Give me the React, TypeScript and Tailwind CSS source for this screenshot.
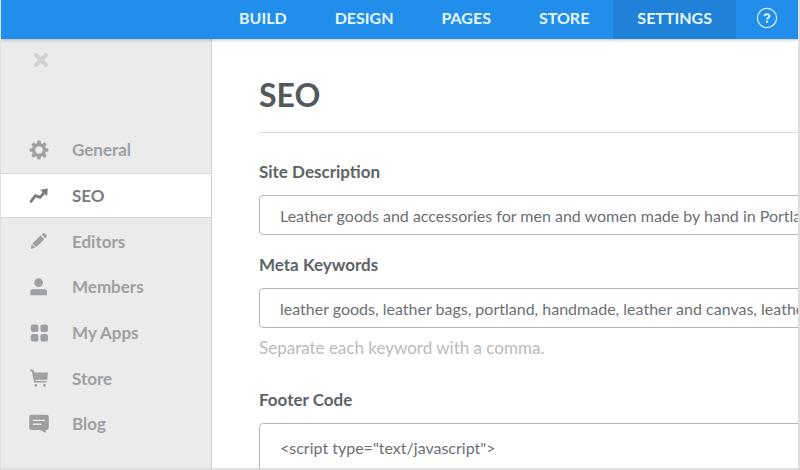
import React, { useState } from 'react';

const navLinks = ['Build', 'Design', 'Pages', 'Store', 'Settings'];

const GearIcon = () => (
  <svg viewBox="0 0 20 20" className="w-5 h-5" fill="none" stroke="currentColor">
    <circle cx="10" cy="10" r="5.4" strokeWidth="3.4" />
    <g fill="currentColor" stroke="none">
      {[0, 45, 90, 135, 180, 225, 270, 315].map((angle) => (
        <rect key={angle} x="8.2" y="0.6" width="3.6" height="4" rx="1.1" transform={`rotate(${angle} 10 10)`} />
      ))}
    </g>
  </svg>
);

const TrendIcon = () => (
  <svg viewBox="0 0 20 20" className="w-5 h-5">
    <path d="M2 15.4 6.4 9.6 11.2 11.4 15.6 6" fill="none" stroke="currentColor" strokeWidth="2.8" strokeLinejoin="round" strokeLinecap="round" />
    <path d="M11.7 4 18.4 2.8 17.9 9.6Z" fill="currentColor" stroke="currentColor" strokeWidth="0.6" strokeLinejoin="round" />
  </svg>
);

const PencilIcon = () => (
  <svg viewBox="0 0 20 20" className="w-5 h-5" fill="currentColor">
    <path d="M1.6 18 2.9 13.2 6.4 16.7Z" />
    <path d="M3.4 12.4 11.6 4.4 15.4 8.2 7.2 16.2Z" />
    <path d="M12.5 3.6 14 2.3Q14.9 1.6 15.8 2.4L17.5 4.1Q18.2 5 17.5 5.9L16.2 7.3Z" />
  </svg>
);

const MemberIcon = () => (
  <svg viewBox="0 0 20 20" className="w-5 h-5" fill="currentColor">
    <circle cx="9.6" cy="5.6" r="4.3" />
    <path d="M1.4 18.2V14.6Q1.4 12.2 4 12.2H15.4Q18 12.2 18 14.6V18.2Z" />
  </svg>
);

const AppsIcon = () => (
  <svg viewBox="0 0 20 20" className="w-5 h-5" fill="currentColor">
    <rect x="1.8" y="1.4" width="7.6" height="7.6" rx="2.2" />
    <rect x="11.4" y="1.4" width="7.6" height="7.6" rx="2.2" />
    <rect x="1.8" y="11" width="7.6" height="7.6" rx="2.2" />
    <rect x="11.4" y="11" width="7.6" height="7.6" rx="2.2" />
  </svg>
);

const CartIcon = () => (
  <svg viewBox="0 0 20 20" className="w-5 h-5" fill="currentColor">
    <path d="M1 1.2 4.4 1.8 5.2 4.4H19L18.2 11.8H6.6L6.8 13H17.6V14.6H5.2L2.9 3.8 1.2 3Z" />
    <circle cx="6.8" cy="17.4" r="1.4" />
    <circle cx="15.4" cy="17.4" r="1.4" />
  </svg>
);

const BlogIcon = () => (
  <svg viewBox="0 0 20 20" className="w-5 h-5">
    <path d="M2.6 0.8H17.4Q19.8 0.8 19.8 3.2V13.6Q19.8 16 17.4 16H16.8V19L11 16H2.6Q0.2 16 0.2 13.6V3.2Q0.2 0.8 2.6 0.8Z" fill="currentColor" />
    <path d="M4 6.4H16M4 10.2H12.6" stroke="#ebebeb" strokeWidth="1.4" />
  </svg>
);

const sideLinks = [
  { name: 'General', icon: GearIcon },
  { name: 'SEO', icon: TrendIcon },
  { name: 'Editors', icon: PencilIcon },
  { name: 'Members', icon: MemberIcon },
  { name: 'My Apps', icon: AppsIcon },
  { name: 'Store', icon: CartIcon },
  { name: 'Blog', icon: BlogIcon },
];

const Header: React.FC = () => (
  <header className="relative z-10 flex h-[39px] shrink-0 justify-end bg-[#218eeb] pr-5 text-white shadow-[0_1px_3px_rgba(0,0,0,0.25)]">
    <nav className="flex">
      {navLinks.map((link) => (
        <a
          key={link}
          href="#"
          className={`flex items-center px-6 pb-1 text-base font-bold uppercase text-[#e6f6ff] ${link === 'Settings' ? 'bg-[#1f82d8]' : ''}`}
        >
          {link}
        </a>
      ))}
    </nav>
    <button type="button" aria-label="Help" className="ml-5 pb-1 text-[#d8efff]">
      <svg viewBox="0 0 22 22" className="w-[22px] h-[22px]" fill="none" stroke="currentColor">
        <circle cx="11" cy="11" r="9.6" strokeWidth="1.2" />
        <path d="M8.6 9.2Q8.7 7.2 11 7.2 13.4 7.2 13.4 9.1 13.4 10.2 12.2 10.8 11.1 11.4 11.1 12.6" strokeWidth="2" />
        <circle cx="11.1" cy="14.8" r="1.2" fill="currentColor" stroke="none" />
      </svg>
    </button>
  </header>
);

const Sidebar: React.FC = () => (
  <aside className="w-[211px] shrink-0 border-r border-[#cfd3d5] bg-[#ebebeb]">
    <button type="button" aria-label="Close" className="mt-[14px] ml-[33px] block text-[#d0d2d3]">
      <svg viewBox="0 0 14 14" className="w-[14px] h-[14px]" fill="none" stroke="currentColor" strokeWidth="4.2" strokeLinecap="round">
        <path d="M2.3 2.3 11.7 11.7M11.7 2.3 2.3 11.7" />
      </svg>
    </button>
    <nav className="mt-[60px] grid h-[320px] grid-rows-7">
      {sideLinks.map(({ name, icon: Icon }) => (
        <a
          key={name}
          href="#"
          className={`flex items-center gap-[23px] border-y pl-7 text-[17px] font-bold ${
            name === 'SEO' ? 'border-[#d6d8d9] bg-white text-[#797d7f]' : 'border-transparent text-[#9da0a2]'
          }`}
        >
          <Icon />
          <span>{name}</span>
        </a>
      ))}
    </nav>
  </aside>
);

const labelClass = 'block text-[17px] leading-6 font-bold text-[#5d6366]';
const fieldClass =
  'mt-[11px] block w-full rounded border border-[#b4b7b8] bg-white px-5 text-base text-[#6c7072] outline-none';

export default function App() {
  const [description, setDescription] = useState(
    'Leather goods and accessories for men and women made by hand in Portland'
  );
  const [keywords, setKeywords] = useState(
    'leather goods, leather bags, portland, handmade, leather and canvas, leather'
  );
  const [footerCode, setFooterCode] = useState('<script type="text/javascript">');

  return (
    <div className="flex h-screen flex-col overflow-hidden border-r-2 border-b-2 border-l border-[#dfdfdf] bg-white font-['Lato',sans-serif]">
      <Header />
      <div className="flex min-h-0 flex-1">
        <Sidebar />
        <main className="min-w-0 flex-1 overflow-hidden pl-[47px]">
          {/* Fields run past the right edge of the panel */}
          <form className="-mr-8">
            <h1 className="border-b border-[#d8dada] pt-9 pb-[17px] text-[32px] leading-10 font-bold text-[#54595b]">SEO</h1>

            <label htmlFor="description" className={`${labelClass} mt-[27px]`}>
              Site Description
            </label>
            <input
              id="description"
              value={description}
              onChange={(e) => setDescription(e.target.value)}
              className={`${fieldClass} h-10`}
            />

            <label htmlFor="keywords" className={`${labelClass} mt-[18px]`}>
              Meta Keywords
            </label>
            <input
              id="keywords"
              value={keywords}
              onChange={(e) => setKeywords(e.target.value)}
              className={`${fieldClass} h-10`}
            />
            <p className="mt-2 text-[17px] leading-6 text-[#b9bbbc]">Separate each keyword with a comma.</p>

            <label htmlFor="footer-code" className={`${labelClass} mt-7`}>
              Footer Code
            </label>
            <textarea
              id="footer-code"
              value={footerCode}
              onChange={(e) => setFooterCode(e.target.value)}
              rows={5}
              className={`${fieldClass} resize-none py-3`}
            />
          </form>
        </main>
      </div>
    </div>
  );
}
